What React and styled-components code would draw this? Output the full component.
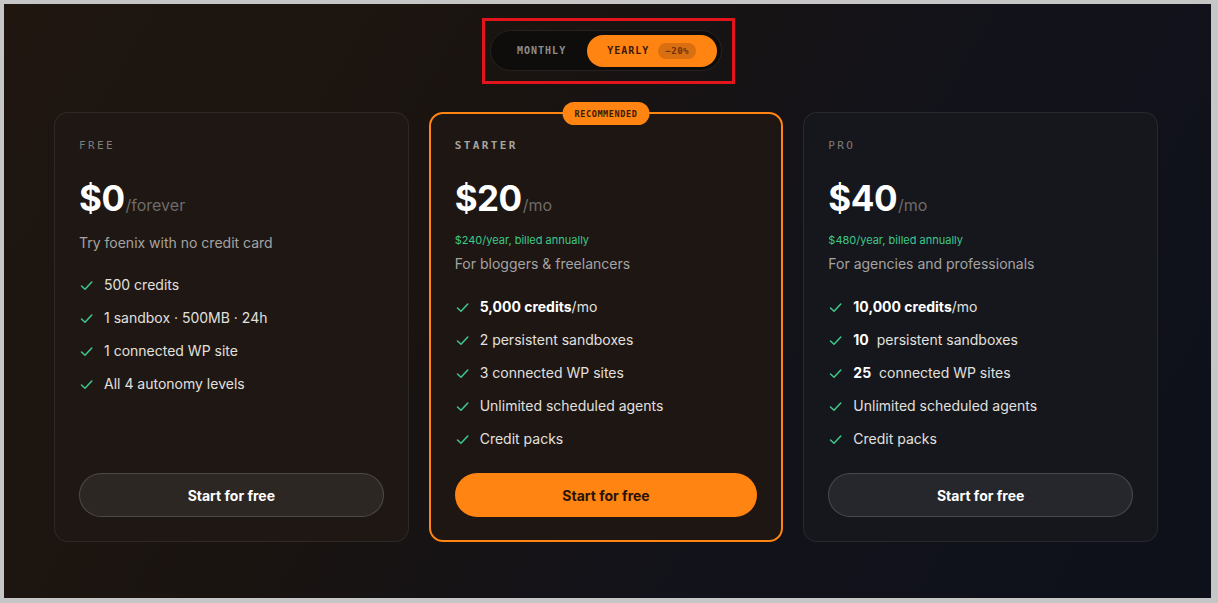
import React from "react";
import styled, { createGlobalStyle } from "styled-components";

const GlobalStyle = createGlobalStyle`
  html, body {
    margin: 0;
    padding: 0;
    background: #c9c9c9;
  }
  * {
    box-sizing: border-box;
  }
`;

const Frame = styled.div`
  width: 1218px;
  height: 603px;
  border-style: solid;
  border-color: #c6c6c6;
  border-width: 4px 7px 5px 4px;
  overflow: hidden;
`;

const Page = styled.div`
  height: 100%;
  display: flex;
  flex-direction: column;
  align-items: center;
  padding-top: 26px;
  font-family: Inter, "Noto Sans", sans-serif;
  background: linear-gradient(120deg, #1f1610 0%, #1a1410 35%, #12121a 65%, #0e111a 100%);
`;

const ToggleWrap = styled.div`
  position: relative;
  margin-left: -3px;
`;

const Annotation = styled.div`
  position: absolute;
  left: -8px;
  top: -12px;
  right: -13px;
  bottom: -13px;
  border: 3px solid #e3141b;
  pointer-events: none;
`;

const Toggle = styled.div`
  display: flex;
  align-items: center;
  height: 41px;
  padding: 4px;
  border-radius: 21px;
  background: #0f0d0c;
  border: 1px solid #262220;
`;

const ToggleButton = styled.button`
  display: flex;
  align-items: center;
  gap: 9px;
  height: 32px;
  padding: ${(p) => (p.$active ? "0 21px 0 20px" : "0 21px 0 22px")};
  border: none;
  border-radius: 16px;
  background: ${(p) => (p.$active ? "#ff8412" : "transparent")};
  color: ${(p) => (p.$active ? "#3a1a06" : "#8d8d8d")};
  font-family: "DejaVu Sans Mono", "Liberation Mono", monospace;
  font-weight: 700;
  font-size: 10px;
  letter-spacing: 1px;
`;

const Discount = styled.span`
  display: inline-flex;
  align-items: center;
  height: 16px;
  padding: 0 7px;
  border-radius: 8px;
  background: #d96f10;
  color: #6b3208;
  font-size: 9px;
  letter-spacing: 0.5px;
`;

const Cards = styled.div`
  display: grid;
  grid-template-columns: repeat(3, 1fr);
  gap: 20px;
  width: 1104px;
  margin-top: 41px;
  margin-left: -3px;
`;

const Card = styled.div`
  position: relative;
  display: flex;
  flex-direction: column;
  height: 430px;
  padding: ${(p) => (p.$featured ? "24px 24px 23px" : "25px 24px 24px")};
  border-radius: 14px;
  border: ${(p) => (p.$featured ? "2px solid #ff8412" : "1px solid rgba(255, 255, 255, 0.08)")};
  background: ${(p) => p.$bg};
`;

const Badge = styled.span`
  position: absolute;
  top: -12px;
  left: 50%;
  transform: translateX(-50%);
  height: 23px;
  padding: 0 12px;
  display: flex;
  align-items: center;
  border-radius: 12px;
  background: #ff8412;
  color: #3a1a06;
  font-family: "DejaVu Sans Mono", "Liberation Mono", monospace;
  font-weight: 700;
  font-size: 8.5px;
  letter-spacing: 0.6px;
`;

const Tier = styled.div`
  font-family: "DejaVu Sans Mono", "Liberation Mono", monospace;
  font-size: 11px;
  line-height: 16px;
  letter-spacing: 2.4px;
  color: ${(p) => (p.$featured ? "#a9a39e" : "#7f7c7a")};
  font-weight: ${(p) => (p.$featured ? 700 : 400)};
`;

const PriceRow = styled.div`
  display: flex;
  align-items: baseline;
  margin-top: 24px;
  line-height: 40px;
`;

const Amount = styled.span`
  font-size: 35px;
  font-weight: 700;
  color: #ffffff;
  letter-spacing: -0.5px;
`;

const Period = styled.span`
  font-size: 16px;
  color: #6f6b69;
  margin-left: 1px;
`;

const Billed = styled.div`
  margin-top: 7px;
  font-size: 11px;
  line-height: 16px;
  color: #3ec98a;
`;

const Desc = styled.div`
  margin-top: ${(p) => (p.$tight ? "6px" : "8px")};
  font-size: 14px;
  line-height: 20px;
  color: #a6a3a1;
`;

const Features = styled.ul`
  list-style: none;
  margin: ${(p) => (p.$tight ? "23px" : "22px")} 0 0;
  padding: 0;
  display: flex;
  flex-direction: column;
  gap: 13px;
`;

const Feature = styled.li`
  display: flex;
  align-items: center;
  gap: 11px;
  font-size: 14px;
  line-height: 20px;
  color: #e2e0df;

  b {
    color: #ffffff;
    font-weight: 700;
  }
`;

const CheckIcon = styled.svg`
  width: 13px;
  height: 13px;
  flex: none;
  margin-left: 1px;
`;

const CTA = styled.button`
  margin-top: auto;
  height: 44px;
  border-radius: 22px;
  font-family: Inter, "Noto Sans", sans-serif;
  font-size: 14px;
  font-weight: 700;
  cursor: pointer;
  border: ${(p) => (p.$primary ? "none" : "1px solid rgba(255, 255, 255, 0.16)")};
  background: ${(p) => (p.$primary ? "#ff8412" : "rgba(255, 255, 255, 0.07)")};
  color: ${(p) => (p.$primary ? "#2a1205" : "#ffffff")};
`;

const Check = () => (
  <CheckIcon viewBox="0 0 13 13" fill="none">
    <path d="M1.5 7 L5 10.3 L11.8 3" stroke="#3ec98a" strokeWidth="1.5" strokeLinecap="round" strokeLinejoin="round" />
  </CheckIcon>
);

const plans = [
  {
    tier: "FREE",
    price: "$0",
    period: "/forever",
    desc: "Try foenix with no credit card",
    bg: "#1e1713",
    features: [
      <>500 credits</>,
      <>1 sandbox · 500MB · 24h</>,
      <>1 connected WP site</>,
      <>All 4 autonomy levels</>,
    ],
  },
  {
    tier: "STARTER",
    price: "$20",
    period: "/mo",
    billed: "$240/year, billed annually",
    desc: "For bloggers & freelancers",
    featured: true,
    bg: "#1d1613",
    features: [
      <><b>5,000 credits</b>/mo</>,
      <>2 persistent sandboxes</>,
      <>3 connected WP sites</>,
      <>Unlimited scheduled agents</>,
      <>Credit packs</>,
    ],
  },
  {
    tier: "PRO",
    price: "$40",
    period: "/mo",
    billed: "$480/year, billed annually",
    desc: "For agencies and professionals",
    bg: "#15171d",
    features: [
      <><b>10,000 credits</b>/mo</>,
      <><b>10</b>&nbsp; persistent sandboxes</>,
      <><b>25</b>&nbsp; connected WP sites</>,
      <>Unlimited scheduled agents</>,
      <>Credit packs</>,
    ],
  },
];

export default function App() {
  return (
    <Frame>
      <GlobalStyle />
      <Page>
        <ToggleWrap>
          <Toggle>
            <ToggleButton>MONTHLY</ToggleButton>
            <ToggleButton $active>
              YEARLY <Discount>−20%</Discount>
            </ToggleButton>
          </Toggle>
          <Annotation />
        </ToggleWrap>

        <Cards>
          {plans.map((plan) => (
            <Card key={plan.tier} $featured={plan.featured} $bg={plan.bg}>
              {plan.featured && <Badge>RECOMMENDED</Badge>}
              <Tier $featured={plan.featured}>{plan.tier}</Tier>
              <PriceRow>
                <Amount>{plan.price}</Amount>
                <Period>{plan.period}</Period>
              </PriceRow>
              {plan.billed && <Billed>{plan.billed}</Billed>}
              <Desc $tight={!!plan.billed}>{plan.desc}</Desc>
              <Features $tight={!!plan.billed}>
                {plan.features.map((f, i) => (
                  <Feature key={i}>
                    <Check />
                    <span>{f}</span>
                  </Feature>
                ))}
              </Features>
              <CTA $primary={plan.featured}>Start for free</CTA>
            </Card>
          ))}
        </Cards>
      </Page>
    </Frame>
  );
}
